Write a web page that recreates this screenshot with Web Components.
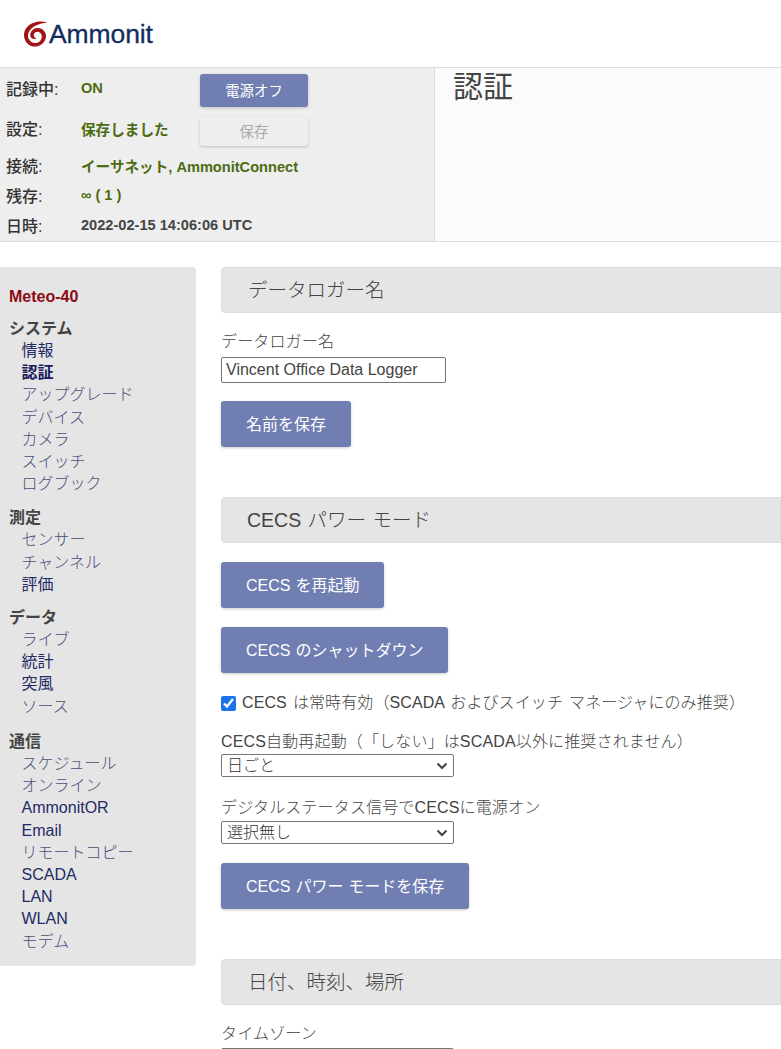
<!DOCTYPE html>
<html lang="ja">
<head>
<meta charset="utf-8">
<title>Ammonit</title>
<style>
  html, body { margin: 0; padding: 0; background: #fff; height: 1049px; overflow: hidden; }
</style>
</head>
<body>
<am-page>
  <am-top slot="top"></am-top>
  <am-status slot="status" title-text="認証"></am-status>
  <am-nav slot="nav"></am-nav>

  <am-section heading="データロガー名" gap="50">
    <am-field label="データロガー名" style="--label-mb: 3px"><am-textinput value="Vincent Office Data Logger"></am-textinput></am-field>
    <am-button style="margin-top: 18px">名前を保存</am-button>
  </am-section>

  <am-section heading="CECS パワー モード" indent="26" gap="50">
    <am-button style="margin-top: 19px">CECS を再起動</am-button>
    <am-button style="margin-top: 19px">CECS のシャットダウン</am-button>
    <am-check style="margin-top: 18px">CECS は常時有効（SCADA およびスイッチ マネージャにのみ推奨）</am-check>
    <am-field label="CECS自動再起動（「しない」はSCADA以外に推奨されません）" style="margin-top: 15px"><am-select value="日ごと"></am-select></am-field>
    <am-field label="デジタルステータス信号でCECSに電源オン" style="margin-top: 19px; --label-mb: 1px"><am-select value="選択無し"></am-select></am-field>
    <am-button style="margin-top: 19px">CECS パワー モードを保存</am-button>
  </am-section>

  <am-section heading="日付、時刻、場所" gap="0">
    <am-field label="タイムゾーン" style="margin-top: 17px; --label-mb: 2px"><am-select></am-select></am-field>
  </am-section>
</am-page>

<script>
const latin = '"Liberation Sans", "Noto Sans CJK JP", sans-serif';

class AmPage extends HTMLElement {
  constructor() {
    super();
    this.attachShadow({ mode: 'open' });
    this.shadowRoot.innerHTML = `
      <style>
        :host { display: block; width: 781px; text-spacing-trim: space-all; }
        .body {
          display: grid;
          grid-template-columns: 196px 560px;
          column-gap: 25px;
          margin-top: 25px;
          align-items: start;
        }
      </style>
      <slot name="top"></slot>
      <slot name="status"></slot>
      <div class="body">
        <slot name="nav"></slot>
        <div class="main"><slot></slot></div>
      </div>
    `;
  }
}

class AmTop extends HTMLElement {
  constructor() {
    super();
    this.attachShadow({ mode: 'open' });
    this.shadowRoot.innerHTML = `
      <style>
        :host { display: flex; align-items: center; height: 67px; padding-left: 23px; box-sizing: border-box; }
        svg { width: 25px; height: 26px; display: block; margin-top: 1px; }
        span {
          font: 26.5px/30px ${latin};
          color: #142b5c;
          margin-left: 1px;
          letter-spacing: -0.1px;
          -webkit-text-stroke: 0.3px #142b5c;
        }
        .logo { display: flex; align-items: center; }
      </style>
      <div class="logo">
        <svg viewBox="0 0 25 26">
          <path d="M24.5 1.5C17 -1 6 1 2 9 -1 16 3 24 10 25.5 17 26.5 23 21 23 15 23 10 18.5 6.5 14 7 10 7.5 7 11 7.2 14.5 7.5 17.5 10.5 19 13.5 17.5 11.5 17 10.2 15 11 13 12 10.8 15 10 17 11.8 19.5 14 19.5 18 16.5 20.5 13.5 23 8.5 22.5 6 18.5 3.5 14 6 8.5 11 5.5 15 3 20 2 24.5 1.5Z" fill="#a3141a"/>
        </svg>
        <span>Ammonit</span>
      </div>
    `;
  }
}

class AmStatus extends HTMLElement {
  static rows = [
    ['記録中:', 'ON', 'on', 42],
    ['設定:', '保存しました', 'on', 38],
    ['接続:', 'イーサネット, AmmonitConnect', 'on', 30],
    ['残存:', '∞ ( 1 )', 'on', 30],
    ['日時:', '2022-02-15 14:06:06 UTC', 'dark', 30]
  ];

  constructor() {
    super();
    this.attachShadow({ mode: 'open' });
  }

  connectedCallback() {
    const rows = AmStatus.rows.map((r, i) => `
      <div class="row ${i < 2 ? 'high' : ''}" style="height:${r[3]}px">
        <span class="k">${r[0]}</span>
        <span class="v ${r[2]}">${r[1]}</span>
        ${i === 0 ? '<am-button small>電源オフ</am-button>' : ''}
        ${i === 1 ? '<am-button small disabled>保存</am-button>' : ''}
      </div>`).join('');
    this.shadowRoot.innerHTML = `
      <style>
        :host {
          display: grid;
          grid-template-columns: 435px 1fr;
          height: 175px;
          box-sizing: border-box;
          border-top: 1px solid #ddd;
          border-bottom: 1px solid #ddd;
          font-family: ${latin};
        }
        .left { background: #eee; border-right: 1px solid #ddd; padding-top: 1px; }
        .right { background: #fbfbfb; padding-left: 18px; }
        h1 { margin: 0; font: 400 30px/38px ${latin}; color: #444; }
        .row { display: flex; align-items: center; }
        .row:nth-child(3) { margin-top: 1px; }
        .k { width: 74px; margin-left: 6px; font-size: 16px; font-weight: 500; color: #333; flex: none; }
        .v { margin-left: 1px; font-size: 14.6px; font-weight: 700; width: 119px; white-space: nowrap; flex: none; }
        .high .k, .high .v { margin-bottom: 4px; }
        .on { color: #4c6b12; }
        .dark { color: #444; }
        am-button { flex: none; }
      </style>
      <div class="left">${rows}</div>
      <div class="right"><h1>${this.getAttribute('title-text')}</h1></div>
    `;
  }
}

class AmNav extends HTMLElement {
  static groups = [
    ['システム', [['情報'], ['認証', 1], ['アップグレード'], ['デバイス'], ['カメラ'], ['スイッチ'], ['ログブック']], 12],
    ['測定', [['センサー'], ['チャンネル'], ['評価']], 11],
    ['データ', [['ライブ'], ['統計'], ['突風'], ['ソース']], 13.2],
    ['通信', [['スケジュール'], ['オンライン'], ['AmmonitOR'], ['Email'], ['リモートコピー'], ['SCADA'], ['LAN'], ['WLAN'], ['モデム']], 0]
  ];

  constructor() {
    super();
    this.attachShadow({ mode: 'open' });
  }

  connectedCallback() {
    const isKana = s => /^[\u30A0-\u30FF]+$/.test(s);
    const html = AmNav.groups.map(g => `
      <section style="margin-bottom:${g[2]}px">
        <h3>${g[0]}</h3>
        ${g[1].map(i => `<a href="#" class="${i[1] ? 'cur' : ''} ${isKana(i[0]) ? 'kana' : ''}">${i[0]}</a>`).join('')}
      </section>`).join('');
    this.shadowRoot.innerHTML = `
      <style>
        :host {
          display: block;
          height: 699px;
          box-sizing: border-box;
          background: #e5e5e5;
          border-radius: 0 4px 4px 0;
          padding: 20px 0 0 9px;
          font-family: ${latin};
        }
        .dev { margin: 0 0 11px; font: 700 16px/20px ${latin}; color: #8b0c14; }
        h3 { margin: 0; font: 700 16px/22px ${latin}; color: #444; }
        a { display: block; margin-left: 12.5px; font-size: 16px; line-height: 22.2px; color: #232a66; text-decoration: none; }
        .kana { color: #4b4f7c; font-weight: 300; }
        .cur { font-weight: 700; color: #1a1a5e; }
      </style>
      <div class="dev">Meteo-40</div>
      ${html}
    `;
  }
}

class AmSection extends HTMLElement {
  constructor() {
    super();
    this.attachShadow({ mode: 'open' });
  }

  connectedCallback() {
    const indent = this.getAttribute('indent') || 27;
    this.shadowRoot.innerHTML = `
      <style>
        :host { display: block; margin-bottom: ${this.getAttribute('gap')}px; font-family: ${latin}; }
        h2 {
          margin: 0;
          height: 46px;
          box-sizing: border-box;
          padding-left: ${indent - 1}px;
          background: #e5e5e5;
          border: 1px solid #ddd;
          border-radius: 4px 0 0 4px;
          font: 300 19.5px/44px ${latin};
          color: #444;
          word-spacing: 1px;
        }
        .content { display: flex; flex-direction: column; align-items: flex-start; }
      </style>
      <h2>${this.getAttribute('heading')}</h2>
      <div class="content"><slot></slot></div>
    `;
  }
}

class AmField extends HTMLElement {
  constructor() {
    super();
    this.attachShadow({ mode: 'open' });
  }

  connectedCallback() {
    this.shadowRoot.innerHTML = `
      <style>
        :host { display: block; margin-top: 17px; font-family: ${latin}; }
        label {
          display: block;
          margin-bottom: var(--label-mb, 0);
          font-size: 16px;
          font-weight: 300;
          line-height: 24px;
          letter-spacing: 0.15px;
          color: #444;
          white-space: nowrap;
        }
      </style>
      <label>${this.getAttribute('label')}</label>
      <slot></slot>
    `;
  }
}

class AmTextinput extends HTMLElement {
  constructor() {
    super();
    this.attachShadow({ mode: 'open' });
  }

  connectedCallback() {
    this.shadowRoot.innerHTML = `
      <style>
        :host { display: block; }
        input {
          display: block;
          width: 225px;
          height: 26px;
          box-sizing: border-box;
          padding: 0 4px;
          border: 1px solid #767676;
          border-radius: 2px;
          font: 16px ${latin};
          color: #444;
          background: #fff;
        }
      </style>
      <input type="text" value="${this.getAttribute('value')}">
    `;
  }
}

class AmSelect extends HTMLElement {
  constructor() {
    super();
    this.attachShadow({ mode: 'open' });
  }

  connectedCallback() {
    this.shadowRoot.innerHTML = `
      <style>
        :host { display: block; }
        .sel {
          display: flex;
          align-items: center;
          justify-content: space-between;
          width: 233px;
          height: 23px;
          box-sizing: border-box;
          padding: 0 5px 0 5px;
          border: 1px solid #767676;
          border-radius: 2px;
          background: #fff;
          font: 300 16px/21px ${latin};
          color: #333;
        }
        svg { width: 12px; height: 8px; display: block; }
      </style>
      <div class="sel">
        <span>${this.getAttribute('value') || ''}</span>
        <svg viewBox="0 0 12 8"><path d="M1.5 1.5 6 6l4.5-4.5" fill="none" stroke="#444" stroke-width="2"/></svg>
      </div>
    `;
  }
}

class AmCheck extends HTMLElement {
  constructor() {
    super();
    this.attachShadow({ mode: 'open' });
  }

  connectedCallback() {
    this.shadowRoot.innerHTML = `
      <style>
        :host { display: flex; align-items: center; font: 300 16px/24px ${latin}; color: #444; white-space: nowrap; word-spacing: 1.5px; letter-spacing: 0.1px; }
        input { width: 15px; height: 15px; margin: 0 6px 0 0; accent-color: #1a73e8; flex: none; }
      </style>
      <input type="checkbox" checked>
      <span><slot></slot></span>
    `;
  }
}

class AmButton extends HTMLElement {
  constructor() {
    super();
    this.attachShadow({ mode: 'open' });
    this.shadowRoot.innerHTML = `
      <style>
        :host { display: inline-block; }
        button {
          display: block;
          height: 46px;
          padding: 0 25px 2px;
          border: 0;
          border-radius: 3px;
          background: #707eb2;
          color: #fff;
          font: 400 16px ${latin};
          word-spacing: 0.5px;
          box-shadow: 0 1px 3px rgba(0,0,0,.2);
          white-space: nowrap;
        }
        :host([small]) button { width: 108px; height: 33px; padding: 0 0 2px; font-size: 14.4px; }
        :host([disabled]) button { height: 29px; background: #eee; color: #aaa; margin-top: 3px; }
      </style>
      <button><slot></slot></button>
    `;
  }
}

customElements.define('am-page', AmPage);
customElements.define('am-top', AmTop);
customElements.define('am-status', AmStatus);
customElements.define('am-nav', AmNav);
customElements.define('am-section', AmSection);
customElements.define('am-field', AmField);
customElements.define('am-textinput', AmTextinput);
customElements.define('am-select', AmSelect);
customElements.define('am-check', AmCheck);
customElements.define('am-button', AmButton);
</script>
</body>
</html>
